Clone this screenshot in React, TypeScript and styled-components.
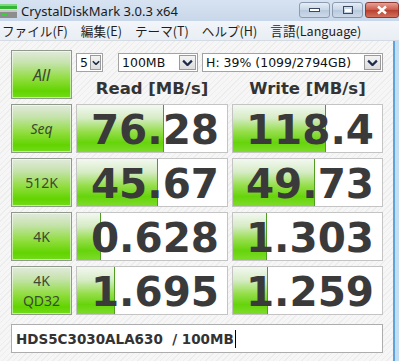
import React from 'react'
import styled, { createGlobalStyle } from 'styled-components';

const GlobalStyle = createGlobalStyle`
  html, body {
    margin:0;
    padding:0;
    width:399px;
    height:361px;
    overflow:hidden;
    background:#fff;
  }
  #root {
    width:399px;
    height:361px;
  }
`;

const Window = styled.div`
  display:flex;
  flex-direction:column;
  width:399px;
  height:361px;
  font-family:"Noto Sans", "Noto Sans CJK JP", sans-serif;
`;

const TitleBar = styled.div`
  display:flex;
  align-items:center;
  height:21px;
  background:linear-gradient(#d7e3f1, #c8d7e9);
`;

const Title = styled.span`
  margin-left:2px;
  font-size:13px;
  color:#1a1a1a;
  flex:1;
`;

const Caption = styled.div`
  display:flex;
  align-self:flex-start;
  margin-top:2px;
  gap:2px;
`;

const CapBtn = styled.div<{ close?: boolean }>`
  display:flex;
  align-items:center;
  justify-content:center;
  width:${p => p.close ? '34px' : '31px'};
  height:16px;
  box-sizing:border-box;
  border:1px solid ${p => p.close ? '#8d3a33' : '#8c9bb0'};
  border-radius:3px;
  background:${p => p.close
    ? 'linear-gradient(#e8a093, #c95a4a 50%, #b83e2e 51%, #d0705c)'
    : 'linear-gradient(#e6edf6, #c7d5e6 50%, #b8c9de 51%, #cdd9e8)'};
`;

const MenuBar = styled.div`
  display:flex;
  align-items:center;
  gap:13px;
  height:19px;
  padding-left:2px;
  background:linear-gradient(#f2f5f9, #e9eef4);
  border-bottom:1px solid #d4dbe3;
`;

const MenuItem = styled.span`
  font-size:12.6px;
  color:#1e1e1e;
  font-family:"Noto Sans CJK JP", "Noto Sans", sans-serif;
`;

const Body = styled.div`
  display:flex;
  flex:1;
`;

const Main = styled.div`
  flex:1;
  padding:9px 0 0 11px;
  background:repeating-linear-gradient(135deg, #f6f6f6 0 3px, #ededed 3px 4px);
`;

const Frame = styled.div`
  width:6px;
  background:linear-gradient(90deg, #5fa3dc 0 2px, #c3ddf3 2px);
`;

const Grid = styled.div`
  display:grid;
  grid-template-columns:61px 152px 151px;
  grid-auto-rows:49px;
  column-gap:4px;
  row-gap:5px;
`;

const TestButton = styled.div<{ italic?: boolean; big?: boolean }>`
  display:flex;
  flex-direction:column;
  align-items:center;
  justify-content:center;
  box-sizing:border-box;
  border:1px solid #8f9a8a;
  box-shadow:inset 0 0 0 1px rgba(255,255,255,0.55);
  background:linear-gradient(#e2e9dc 0%, #c6e3ad 25%, #8edd3b 60%, #62d400 85%, #74db1c 100%);
  color:#3b4a33;
  font-size:${p => p.big ? '16px' : '14px'};
  font-style:${p => p.italic ? 'italic' : 'normal'};
  line-height:20px;
`;

const TopPanel = styled.div`
  grid-column:2 / 4;
  display:flex;
  flex-direction:column;
`;

const SelectRow = styled.div`
  display:flex;
  margin-top:3px;
  height:19px;
`;

const Select = styled.div<{ w: number; gap: number }>`
  display:flex;
  width:${p => p.w}px;
  margin-right:${p => p.gap}px;
  box-sizing:border-box;
  border:1px solid #a3a3a3;
  background:#fff;
`;

const SelectText = styled.span`
  flex:1;
  padding-left:3px;
  font-family:"DejaVu Sans", sans-serif;
  font-size:12.5px;
  line-height:17px;
  color:#111;
  white-space:nowrap;
  overflow:hidden;
`;

const Arrow = styled.div<{ w: number }>`
  display:flex;
  align-items:center;
  justify-content:center;
  width:${p => p.w}px;
  margin:1px;
  box-sizing:border-box;
  border:1px solid #9a9a9a;
  background:linear-gradient(#f4f4f4, #dcdcdc);
`;

const HeaderRow = styled.div`
  display:grid;
  grid-template-columns:152px 151px;
  column-gap:4px;
  margin-top:7px;
`;

const Header = styled.div`
  text-align:center;
  font-family:"DejaVu Sans", sans-serif;
  font-weight:700;
  font-size:16.5px;
  line-height:20px;
  color:#333;
`;

const ValueBox = styled.div`
  position:relative;
  box-sizing:border-box;
  border:1px solid #c4c4c4;
  background:#fff;
  overflow:hidden;
`;

const Bar = styled.div`
  position:absolute;
  left:0;
  top:0;
  bottom:0;
  border-right:1px solid #4f9e22;
  background:linear-gradient(#f3f8f0 0%, #d6ecc6 28%, #97de4d 56%, #66d40a 80%, #7ddc2c 100%);
`;

const Value = styled.div`
  position:relative;
  text-align:right;
  padding-right:8px;
  padding-top:1px;
  font-family:"DejaVu Sans", sans-serif;
  font-weight:700;
  font-size:40.5px;
  line-height:48px;
  color:#3a3a3a;
`;

const InfoBox = styled.div`
  display:flex;
  align-items:center;
  width:372px;
  height:29px;
  margin-top:9px;
  box-sizing:border-box;
  border:1px solid #adadad;
  background:#fff;
  padding-left:4px;
  font-family:"DejaVu Sans", sans-serif;
  font-weight:700;
  font-size:13.5px;
  color:#333;
`;

const Caret = styled.span`
  display:inline-block;
  width:1px;
  height:18px;
  background:#000;
  margin-left:1px;
`;

const Chevron = ({ size }: { size: number }) => (
  <svg width={size} height={size * 0.7} viewBox="0 0 10 7">
    <path d="M1 1.5 L5 5.5 L9 1.5" fill="none" stroke="#1c2c4c" strokeWidth="2" />
  </svg>
);

const AppIcon = () => (
  <svg width="19" height="19" viewBox="0 0 19 19">
    <rect x="0" y="3" width="17" height="5" fill="#35b535" />
    <rect x="0" y="3" width="17" height="2" fill="#7ed87e" />
    <rect x="0" y="9" width="17" height="8" fill="#8d8d8d" />
    <rect x="0" y="9" width="17" height="2" fill="#c7c7c7" />
    <rect x="2" y="13" width="5" height="2" fill="#3ad13a" />
  </svg>
);

type Row = { label: React.ReactNode; italic?: boolean; read: string; rbar: number; write: string; wbar: number };

const rows: Row[] = [
  { label: 'Seq', italic: true, read: '76.28', rbar: 86, write: '118.4', wbar: 92 },
  { label: '512K', read: '45.67', rbar: 80, write: '49.73', wbar: 81 },
  { label: '4K', read: '0.628', rbar: 23, write: '1.303', wbar: 33 },
  { label: <><span>4K</span><span>QD32</span></>, read: '1.695', rbar: 37, write: '1.259', wbar: 34 },
];

const App = () => {
  return (
    <Window>
      <GlobalStyle />
      <TitleBar>
        <AppIcon />
        <Title>CrystalDiskMark 3.0.3 x64</Title>
        <Caption>
          <CapBtn>
            <svg width="11" height="5"><rect x="0.5" y="0.5" width="10" height="3" fill="#fff" stroke="#3a4860" /></svg>
          </CapBtn>
          <CapBtn>
            <svg width="10" height="8"><rect x="0.5" y="0.5" width="9" height="7" fill="none" stroke="#3a4860" /><rect x="2" y="3" width="6" height="3" fill="#fff" /></svg>
          </CapBtn>
          <CapBtn close>
            <svg width="12" height="10"><path d="M2 1.5 L10 8.5 M10 1.5 L2 8.5" stroke="#fff" strokeWidth="2.4" /></svg>
          </CapBtn>
        </Caption>
      </TitleBar>
      <MenuBar>
        <MenuItem>ファイル(F)</MenuItem>
        <MenuItem>編集(E)</MenuItem>
        <MenuItem>テーマ(T)</MenuItem>
        <MenuItem>ヘルプ(H)</MenuItem>
        <MenuItem>言語(Language)</MenuItem>
      </MenuBar>
      <Body>
        <Main>
          <Grid>
            <TestButton italic big>All</TestButton>
            <TopPanel>
              <SelectRow>
                <Select w={27} gap={15}>
                  <SelectText>5</SelectText>
                  <Arrow w={11}><Chevron size={8} /></Arrow>
                </Select>
                <Select w={80} gap={4}>
                  <SelectText>100MB</SelectText>
                  <Arrow w={17}><Chevron size={11} /></Arrow>
                </Select>
                <Select w={181} gap={0}>
                  <SelectText>H: 39% (1099/2794GB)</SelectText>
                  <Arrow w={17}><Chevron size={11} /></Arrow>
                </Select>
              </SelectRow>
              <HeaderRow>
                <Header>Read [MB/s]</Header>
                <Header>Write [MB/s]</Header>
              </HeaderRow>
            </TopPanel>
            {rows.map((r, i) => (
              <React.Fragment key={i}>
                <TestButton italic={r.italic}>{r.label}</TestButton>
                <ValueBox>
                  <Bar style={{ width: r.rbar }} />
                  <Value>{r.read}</Value>
                </ValueBox>
                <ValueBox>
                  <Bar style={{ width: r.wbar }} />
                  <Value>{r.write}</Value>
                </ValueBox>
              </React.Fragment>
            ))}
          </Grid>
          <InfoBox>HDS5C3030ALA630&nbsp;&nbsp;/ 100MB<Caret /></InfoBox>
        </Main>
        <Frame />
      </Body>
    </Window>
  )
}

export default App
